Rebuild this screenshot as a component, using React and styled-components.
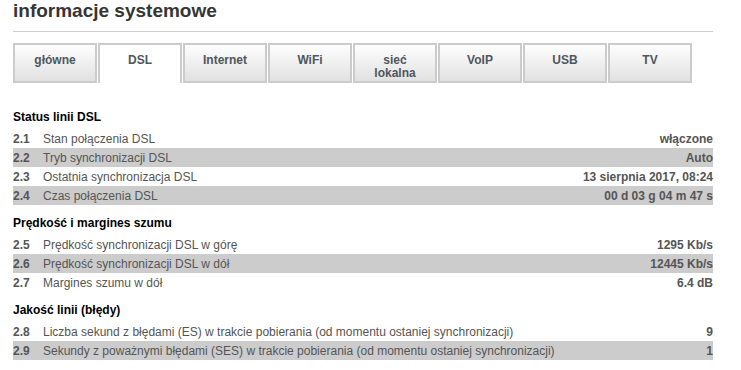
import styled, { createGlobalStyle } from 'styled-components';

const tabs = ['główne', 'DSL', 'Internet', 'WiFi', 'sieć lokalna', 'VoIP', 'USB', 'TV'];

const sections = [
    {
        title: 'Status linii DSL',
        rows: [
            ['2.1', 'Stan połączenia DSL', 'włączone'],
            ['2.2', 'Tryb synchronizacji DSL', 'Auto'],
            ['2.3', 'Ostatnia synchronizacja DSL', '13 sierpnia 2017, 08:24'],
            ['2.4', 'Czas połączenia DSL', '00 d 03 g 04 m 47 s'],
        ],
    },
    {
        title: 'Prędkość i margines szumu',
        rows: [
            ['2.5', 'Prędkość synchronizacji DSL w górę', '1295 Kb/s'],
            ['2.6', 'Prędkość synchronizacji DSL w dół', '12445 Kb/s'],
            ['2.7', 'Margines szumu w dół', '6.4 dB'],
        ],
    },
    {
        title: 'Jakość linii (błędy)',
        rows: [
            ['2.8', 'Liczba sekund z błędami (ES) w trakcie pobierania (od momentu ostaniej synchronizacji)', '9'],
            ['2.9', 'Sekundy z poważnymi błędami (SES) w trakcie pobierania (od momentu ostaniej synchronizacji)', '1'],
        ],
    },
];

function App() {
    return (
        <>
            <GlobalStyle />
            <SPage>
                <STitle>informacje systemowe</STitle>
                <STabs>
                    {tabs.map((tab) => (
                        <STab key={tab} $active={tab === 'DSL'}>{tab}</STab>
                    ))}
                </STabs>
                <SContent>
                    {sections.map((section) => (
                        <SSection key={section.title}>
                            <SHeading>{section.title}</SHeading>
                            {section.rows.map(([num, label, value], i) => (
                                <SRow key={num} $shaded={i % 2 === 1}>
                                    <SNum>{num}</SNum>
                                    <SLabel>{label}</SLabel>
                                    <SValue>{value}</SValue>
                                </SRow>
                            ))}
                        </SSection>
                    ))}
                </SContent>
            </SPage>
        </>
    );
}

const GlobalStyle = createGlobalStyle`
    body {
        margin: 0;
        background: #fff;
        font-family: "Liberation Sans", Arial, sans-serif;
    }
`;

const SPage = styled.div`
    width: 700px;
    padding: 0 13px;
`;

const STitle = styled.h1`
    margin: 0;
    height: 31px;
    padding-bottom: 0;
    border-bottom: 1px solid #cfcfcf;
    font-size: 19px;
    line-height: 22px;
    font-weight: bold;
    color: #353535;
`;

const STabs = styled.div`
    display: flex;
    gap: 1px;
    margin-top: 11px;
`;

const STab = styled.div`
    box-sizing: border-box;
    width: 84px;
    height: 40px;
    padding: 9px 12px 0;
    border: 2px solid #cbcbcb;
    border-bottom: ${(p) => (p.$active ? 'none' : '2px solid #cbcbcb')};
    background: ${(p) => (p.$active ? '#fff' : 'linear-gradient(#fefefe, #e1e1e1)')};
    text-align: center;
    font-size: 12px;
    line-height: 13px;
    font-weight: bold;
    color: #4f565d;
`;

const SContent = styled.div`
    padding-top: 16px;
`;

const SSection = styled.div`
    margin-top: 9px;
`;

const SHeading = styled.h3`
    margin: 0 0 2px;
    font-size: 12px;
    line-height: 19px;
    font-weight: bold;
    color: #000;
`;

const SRow = styled.div`
    box-sizing: border-box;
    display: flex;
    height: 19px;
    padding-top: 1px;
    line-height: 19px;
    font-size: 12px;
    color: #555;
    background: ${(p) => (p.$shaded ? '#cccccc' : 'transparent')};
`;

const SNum = styled.span`
    width: 30px;
    flex-shrink: 0;
    font-weight: bold;
`;

const SLabel = styled.span`
    flex: 1;
    white-space: nowrap;
`;

const SValue = styled.span`
    font-weight: bold;
    text-align: right;
    white-space: nowrap;
`;

export default App;
